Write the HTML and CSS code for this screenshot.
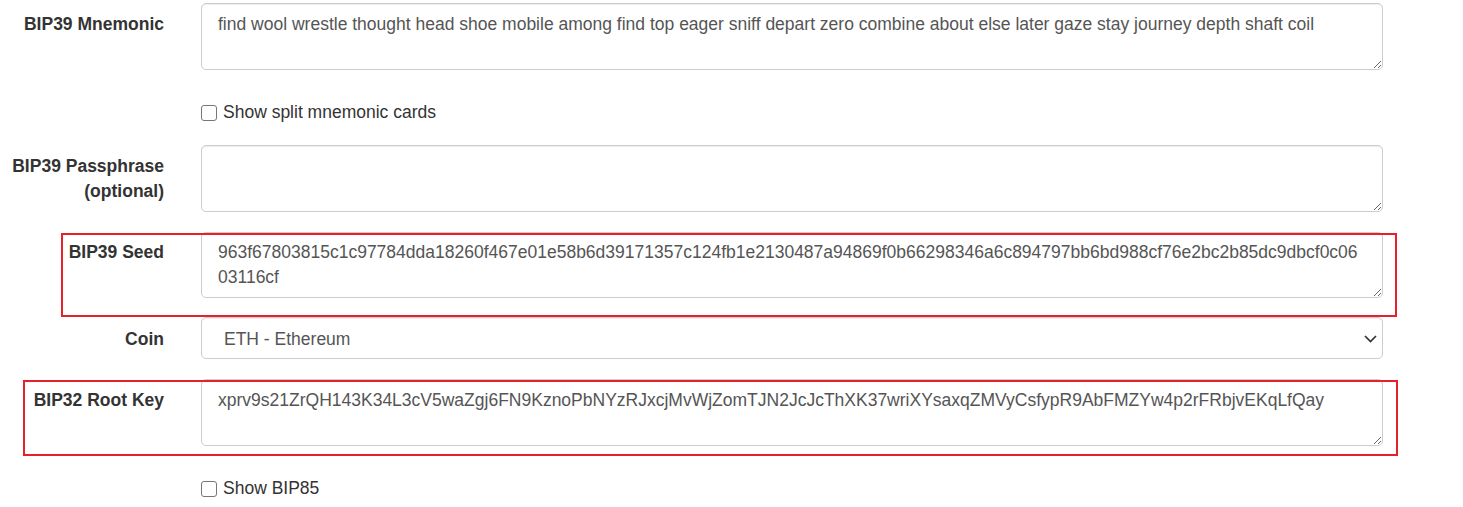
FILE: index.html
```html
<!DOCTYPE html>
<html>
<head>
<meta charset="utf-8">
<title>BIP39</title>
<link rel="stylesheet" href="styles.css">
</head>
<body>
<div class="page">
  <form class="form">
    <div class="group">
      <label class="lbl">BIP39 Mnemonic</label>
      <div class="field"><textarea class="ctl" rows="2">find wool wrestle thought head shoe mobile among find top eager sniff depart zero combine about else later gaze stay journey depth shaft coil</textarea></div>
    </div>
    <div class="group check-group">
      <div class="field offset"><label class="check"><input type="checkbox" class="box"> Show split mnemonic cards</label></div>
    </div>
    <div class="group">
      <label class="lbl">BIP39 Passphrase (optional)</label>
      <div class="field"><textarea class="ctl" rows="2"></textarea></div>
    </div>
    <div class="group seed-group">
      <label class="lbl">BIP39 Seed</label>
      <div class="field"><textarea class="ctl seed" rows="2">963f67803815c1c97784dda18260f467e01e58b6d39171357c124fb1e2130487a94869f0b66298346a6c894797bb6bd988cf76e2bc2b85dc9dbcf0c0603116cf</textarea></div>
    </div>
    <div class="group coin-group">
      <label class="lbl">Coin</label>
      <div class="field select-wrap">
        <select class="ctl sel"><option>ETH - Ethereum</option></select>
        <svg class="chev" width="13" height="8" viewBox="0 0 13 8"><path d="M1 1 L6.5 6.5 L12 1" fill="none" stroke="#333" stroke-width="1.7"/></svg>
      </div>
    </div>
    <div class="group root-group">
      <label class="lbl">BIP32 Root Key</label>
      <div class="field"><textarea class="ctl" rows="2">xprv9s21ZrQH143K34L3cV5waZgj6FN9KznoPbNYzRJxcjMvWjZomTJN2JcJcThXK37wriXYsaxqZMVyCsfypR9AbFMZYw4p2rFRbjvEKqLfQay</textarea></div>
    </div>
    <div class="group check-group">
      <div class="field offset"><label class="check"><input type="checkbox" class="box"> Show BIP85</label></div>
    </div>
  </form>
  <div class="mark mark-seed"></div>
  <div class="mark mark-root"></div>
</div>
</body>
</html>
```
FILE: styles.css
```css
html, body {
  margin: 0;
  padding: 0;
  background: #fff;
}
body {
  font-family: "Liberation Sans", Arial, sans-serif;
  font-size: 17.5px;
  line-height: 25px;
  color: #333;
}
.page {
  position: relative;
  width: 1463px;
  height: 507px;
  overflow: hidden;
}
.form {
  padding-top: 3px;
}
.group {
  display: flex;
  margin-bottom: 20px;
}
.lbl {
  box-sizing: border-box;
  width: 182px;
  flex: none;
  padding: 8.5px 18px 0 8px;
  text-align: right;
  font-weight: bold;
  color: #333;
}
.field {
  width: 1182px;
  flex: none;
  margin-left: 19px;
}
.group .field:first-child {
  margin-left: 201px;
}
.ctl {
  display: block;
  box-sizing: border-box;
  width: 100%;
  margin: 0;
  padding: 7.5px 16px;
  border: 1px solid #ccc;
  border-radius: 5px;
  background: #fff;
  font-family: "Liberation Sans", Arial, sans-serif;
  font-size: 17.5px;
  line-height: 25px;
  color: #555;
  box-shadow: inset 0 1px 1px rgba(0,0,0,0.075);
}
textarea.ctl {
  height: 67px;
  resize: vertical;
  overflow: hidden;
}
.seed-group {
  margin-top: 1px;
  margin-bottom: 19px;
}
.seed-group .lbl {
  padding-top: 8px;
}
textarea.seed {
  height: 66px;
  padding-top: 6.5px;
}
.coin-group .lbl {
  padding-top: 10px;
}
.root-group .lbl {
  padding-top: 8.5px;
}
.select-wrap {
  position: relative;
}
.sel {
  height: 42px;
  -webkit-appearance: none;
  appearance: none;
  padding: 9px 16px 6px 22px;
}
.chev {
  position: absolute;
  right: 6px;
  top: 18px;
}
.check-group {
  height: 35px;
  box-sizing: border-box;
  padding-top: 10px;
}
.check {
  display: flex;
  align-items: center;
  gap: 6px;
  color: #333;
  font-weight: normal;
}
.box {
  -webkit-appearance: none;
  appearance: none;
  width: 16px;
  height: 16px;
  margin: 0;
  border: 1px solid #767676;
  border-radius: 3px;
  background: #fff;
  flex: none;
}
.mark {
  position: absolute;
  border: 2px solid #e8202a;
  box-sizing: border-box;
  pointer-events: none;
}
.mark-seed {
  left: 61px;
  top: 233px;
  width: 1336px;
  height: 84px;
}
.mark-root {
  left: 23px;
  top: 380px;
  width: 1375px;
  height: 76px;
}
```
